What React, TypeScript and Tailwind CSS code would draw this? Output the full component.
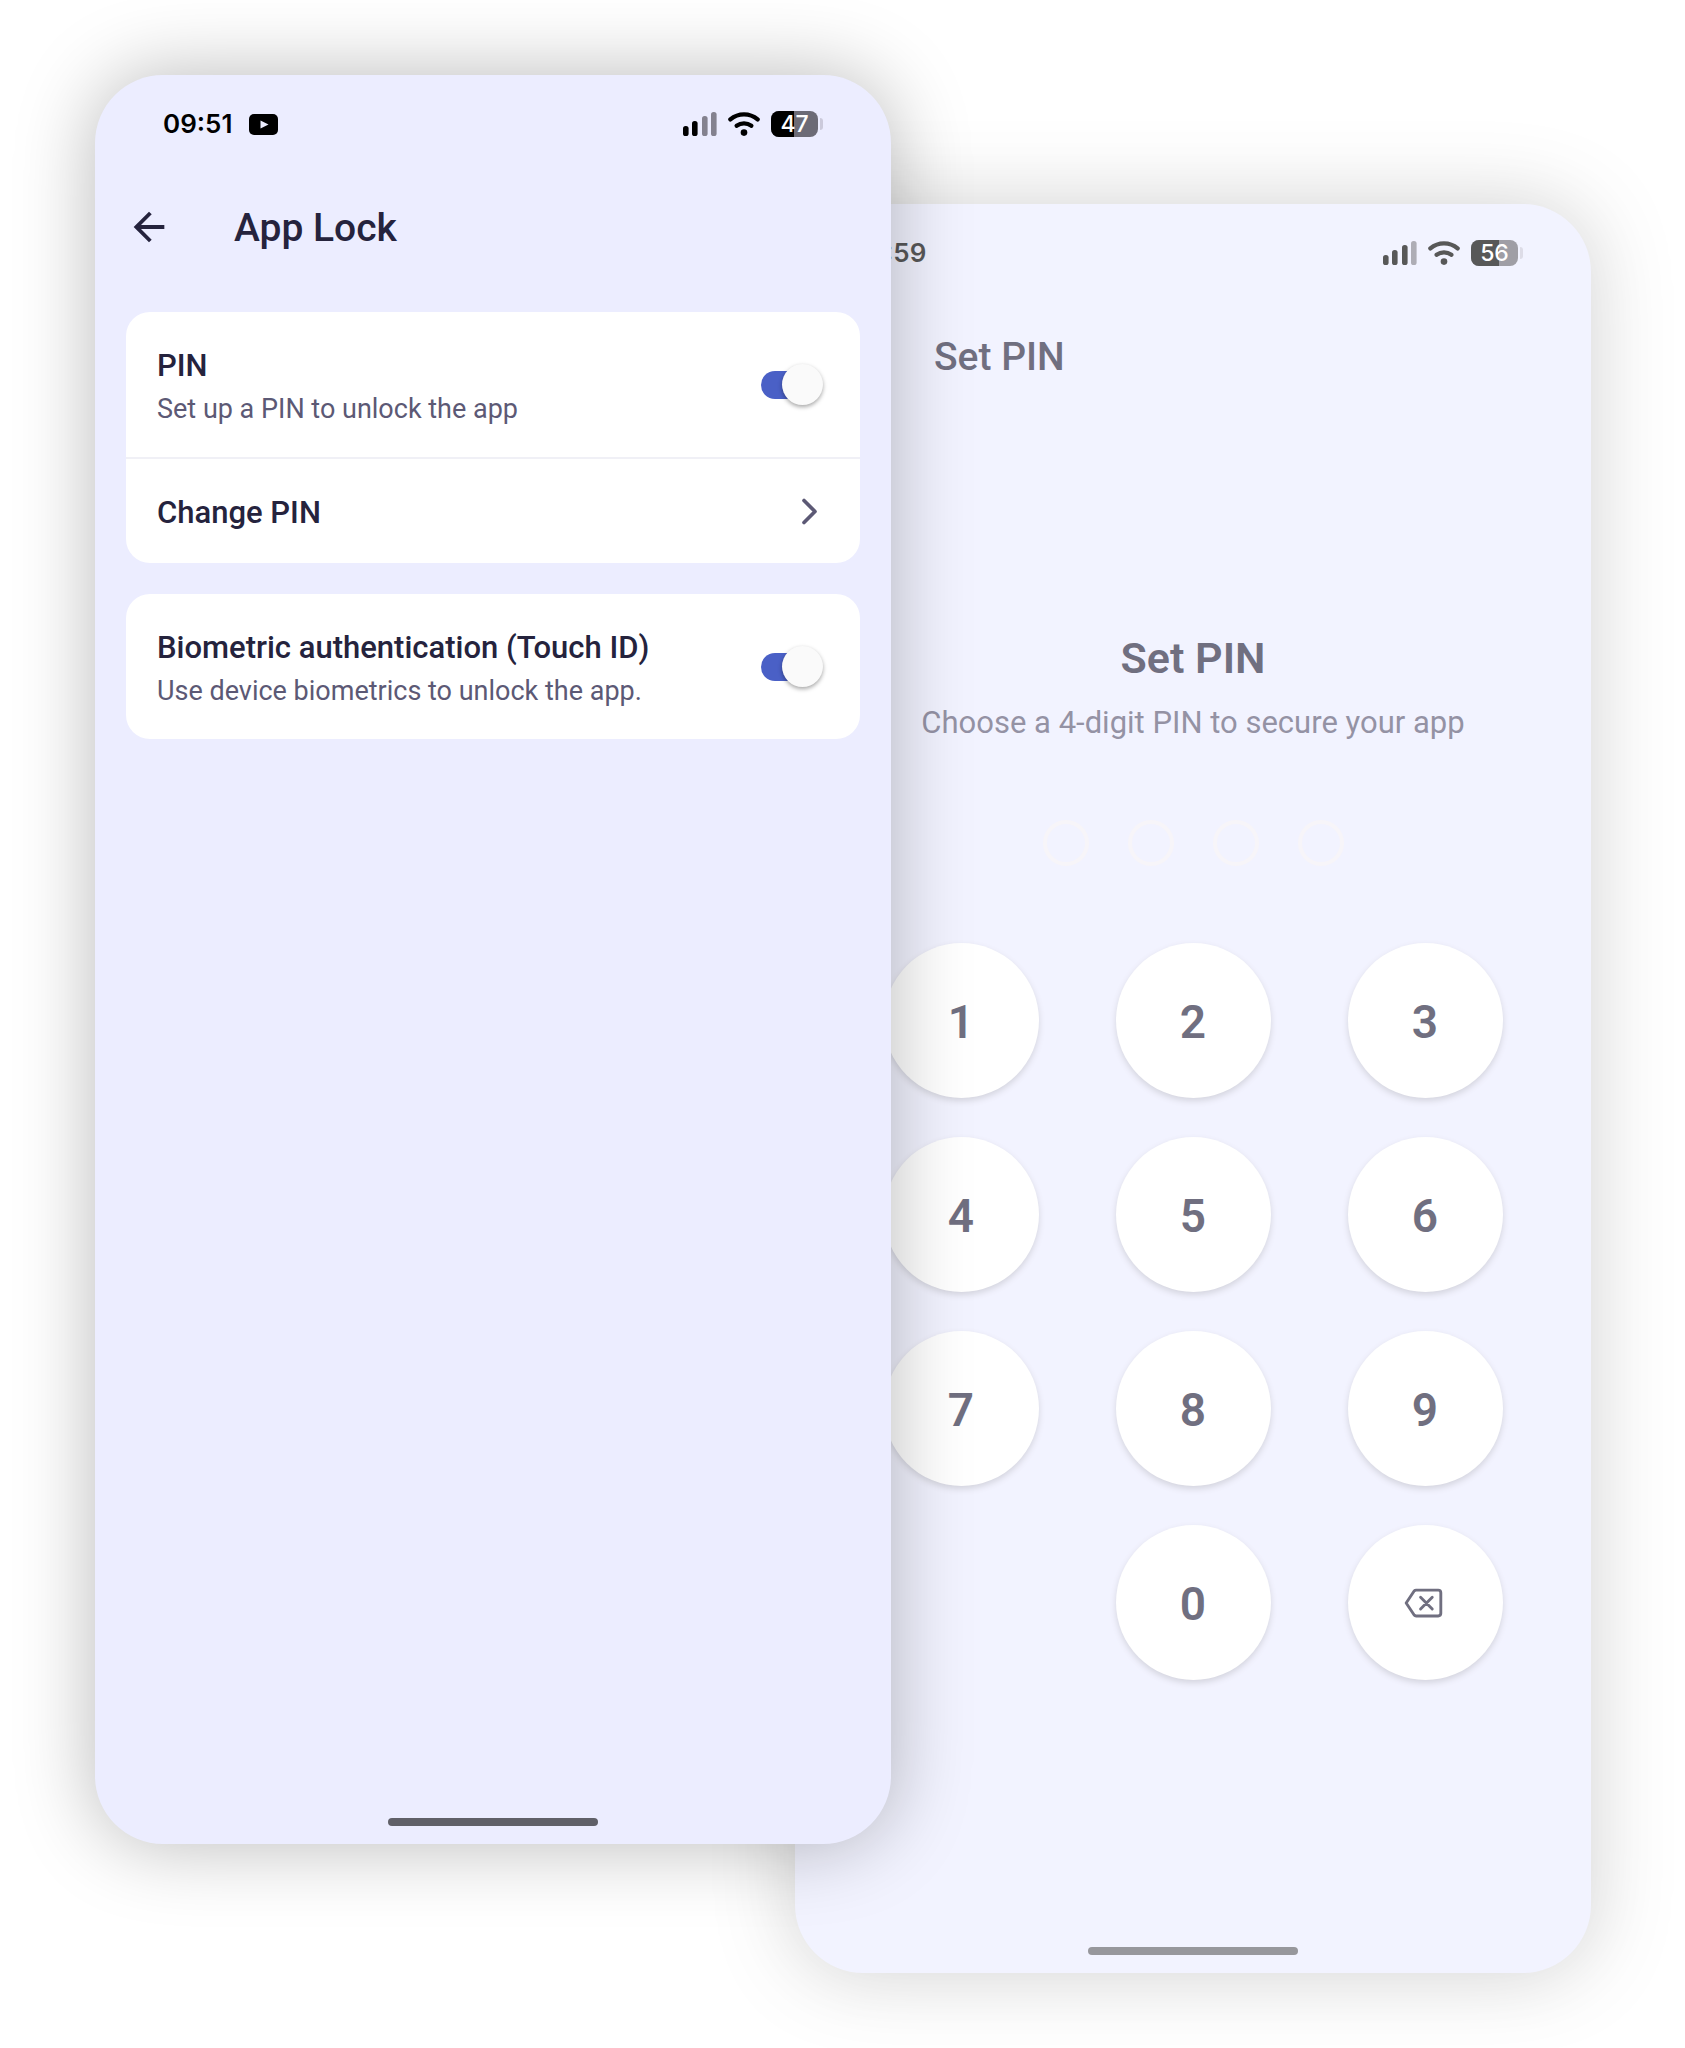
import { useState } from "react";
import type { ReactNode } from "react";
import { MdArrowBack } from "react-icons/md";
import { IoBackspaceOutline, IoChevronForward } from "react-icons/io5";

function SignalIcon({ level }: { level: number }) {
  const bars = [
    { x: 0, h: 10 },
    { x: 9, h: 15 },
    { x: 19, h: 20 },
    { x: 28, h: 24 },
  ];
  return (
    <svg width="34" height="24" viewBox="0 0 34 24" aria-hidden="true">
      {bars.map((b, i) => (
        <rect
          key={b.x}
          x={b.x}
          y={24 - b.h}
          width="5.6"
          height={b.h}
          rx="2.6"
          fill={i < level ? "#000" : "#84828f"}
        />
      ))}
    </svg>
  );
}

function WifiIcon() {
  return (
    <svg width="32" height="24" viewBox="0 0 32 24" fill="none" aria-hidden="true">
      <path d="M2.4 7.4Q8.4 2.4 16 2.4T29.6 7.4" stroke="#000" strokeWidth="4.4" strokeLinecap="round" />
      <path d="M8.6 13.8Q12 11.4 16 11.4T23.4 13.8" stroke="#000" strokeWidth="4.2" strokeLinecap="round" />
      <circle cx="16" cy="20.6" r="3.3" fill="#000" />
    </svg>
  );
}

function Battery({ level, fill }: { level: number; fill: string }) {
  return (
    <div className="flex items-center gap-[2px]">
      <div className="relative flex h-[26px] w-[47px] items-center justify-center overflow-hidden rounded-lg bg-[#6c6b76]">
        <div className="absolute inset-y-0 left-0 bg-black" style={{ width: fill }} />
        <span className="relative font-[Inter] text-[23px] leading-[26px] font-medium text-white">{level}</span>
      </div>
      <div className="h-3 w-[3px] rounded-r-full bg-[#cbcadb]" />
    </div>
  );
}

function StatusBar({
  time,
  badge,
  signal,
  battery,
  fill,
}: {
  time: string;
  badge?: ReactNode;
  signal: number;
  battery: number;
  fill: string;
}) {
  return (
    <div className="flex h-[98px] items-center justify-between px-[68px]">
      <div className="flex items-center gap-[17px]">
        <span className="font-[Inter] text-[26px] leading-8 font-semibold text-black">{time}</span>
        {badge}
      </div>
      <div className="flex items-center gap-[11px]">
        <SignalIcon level={signal} />
        <WifiIcon />
        <Battery level={battery} fill={fill} />
      </div>
    </div>
  );
}

function Header({ title }: { title: string }) {
  return (
    <header className="flex h-[108px] items-center gap-[62px] px-[31px]">
      <button type="button" aria-label="Back" className="text-[#25233d]">
        <MdArrowBack size={46} />
      </button>
      <h1 className="pt-[2px] text-[39px] leading-[46px] font-medium text-[#25233d]">{title}</h1>
    </header>
  );
}

function Phone({ children, className }: { children: ReactNode; className: string }) {
  return (
    <section
      className={`flex min-h-[1769px] min-w-0 flex-1 flex-col rounded-[68px] bg-[#ecedff] shadow-[0_0_80px_rgba(0,0,0,0.28)] ${className}`}
    >
      {children}
      <div className="mx-auto mt-auto mb-[18px] h-2 w-[210px] rounded-full bg-[#606068]" />
    </section>
  );
}

function Toggle({
  id,
  checked,
  onChange,
}: {
  id: string;
  checked: boolean;
  onChange: (value: boolean) => void;
}) {
  return (
    <span className="relative mr-[6px] flex h-[42px] w-[62px] shrink-0 items-center">
      <input
        id={id}
        type="checkbox"
        role="switch"
        checked={checked}
        onChange={(e) => onChange(e.target.checked)}
        className="peer absolute inset-0 z-10 cursor-pointer opacity-0"
      />
      <span className="h-7 w-[60px] rounded-full bg-[#b9b8c6] peer-checked:bg-[#4a60c6]" />
      <span className="absolute top-0 left-0 size-[41px] rounded-full bg-[#fafafa] shadow-[0_2px_4px_rgba(0,0,0,0.35)] peer-checked:right-0 peer-checked:left-auto" />
    </span>
  );
}

function ToggleRow({ id, title, text }: { id: string; title: string; text: string }) {
  const [on, setOn] = useState(true);
  return (
    <div className="flex min-h-[145px] items-center justify-between px-[31px]">
      <label htmlFor={id} className="flex flex-col gap-1 pt-[3px]">
        <span className="text-[31px] leading-[42px] font-medium text-[#25233d]">{title}</span>
        <span className="text-[27px] leading-9 text-[#5c5975]">{text}</span>
      </label>
      <Toggle id={id} checked={on} onChange={setOn} />
    </div>
  );
}

function VideoBadge() {
  return (
    <svg width="29" height="21" viewBox="0 0 29 21" aria-hidden="true">
      <rect width="29" height="21" rx="5" fill="#000" />
      <path d="M11.500 6.500l8 4-8 4z" fill="#ecedff" />
    </svg>
  );
}

function AppLockScreen() {
  return (
    <Phone className="relative z-10">
      <StatusBar time="09:51" badge={<VideoBadge />} signal={2} battery={47} fill="49%" />
      <Header title="App Lock" />
      <div className="flex flex-col gap-[31px] px-[31px] pt-[31px]">
        <div className="rounded-3xl bg-white">
          <ToggleRow id="pin" title="PIN" text="Set up a PIN to unlock the app" />
          <button
            type="button"
            className="flex min-h-[106px] w-full items-center justify-between border-t-2 border-[#f0f0f6] px-[31px] text-left"
          >
            <span className="pt-[3px] text-[31px] leading-[42px] font-medium text-[#25233d]">Change PIN</span>
            <IoChevronForward size={39} className="text-[#5c5975]" />
          </button>
        </div>
        <div className="rounded-3xl bg-white">
          <ToggleRow
            id="biometric"
            title="Biometric authentication (Touch ID)"
            text="Use device biometrics to unlock the app."
          />
        </div>
      </div>
    </Phone>
  );
}

function Key({ children, label }: { children: ReactNode; label: string }) {
  return (
    <button
      type="button"
      aria-label={label}
      className="flex size-[155px] items-center justify-center rounded-full bg-white text-[46px] leading-[54px] font-semibold text-[#25233d] shadow-[0_3px_6px_rgba(0,0,0,0.2)]"
    >
      {children}
    </button>
  );
}

function SetPinScreen() {
  return (
    <Phone className="mt-[129px] -ml-24 opacity-65">
      <StatusBar time="11:59" signal={3} battery={56} fill="59%" />
      <Header title="Set PIN" />
      <div className="flex flex-col items-center pt-[222px]">
        <h2 className="text-[43px] leading-[52px] font-semibold text-[#25233d]">Set PIN</h2>
        <p className="mt-[18px] text-[31px] leading-[42px] text-[#5c5975]">Choose a 4-digit PIN to secure your app</p>
        <div className="mt-[76px] flex gap-[39px]">
          {[0, 1, 2, 3].map((n) => (
            <span key={n} className="size-[46px] rounded-full border-4 border-[#f4f0f6]" />
          ))}
        </div>
        <div className="mt-[77px] grid grid-cols-3 gap-x-[77px] gap-y-[39px]">
          {["1", "2", "3", "4", "5", "6", "7", "8", "9"].map((n) => (
            <Key key={n} label={n}>
              <span className="pt-[3px]">{n}</span>
            </Key>
          ))}
          <span />
          <Key label="0">
            <span className="pt-[3px]">0</span>
          </Key>
          <Key label="Delete">
            <IoBackspaceOutline size={46} />
          </Key>
        </div>
      </div>
    </Phone>
  );
}

export default function App() {
  return (
    <main className="flex min-h-screen items-start bg-white pt-[75px] pr-[94px] pb-[75px] pl-[95px] font-[Roboto,sans-serif]">
      <AppLockScreen />
      <SetPinScreen />
    </main>
  );
}
